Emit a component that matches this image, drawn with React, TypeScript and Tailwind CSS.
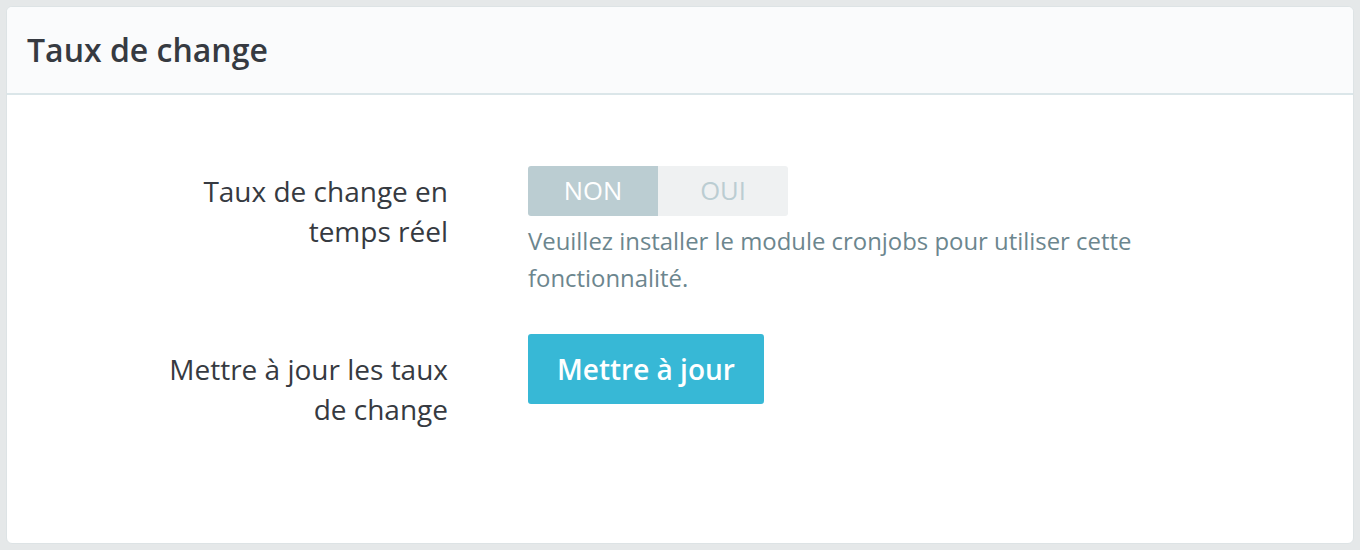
import { useState } from "react";

export default function App() {
  const [live, setLive] = useState(false);

  return (
    <div
      className="min-h-[550px] bg-[#e5e8e9] p-[6px]"
      style={{ fontFamily: '"Open Sans", "Noto Sans", sans-serif' }}
    >
      <div className="h-[538px] rounded-[6px] border border-[#dde3e5] bg-white overflow-hidden">
        {/* Card header */}
        <div className="h-[88px] flex items-center px-[20px] bg-[#fafbfc] border-b-2 border-[#dbe6e9]">
          <h3 className="text-[32px] font-semibold text-[#363a41] leading-none">Taux de change</h3>
        </div>

        {/* Form body */}
        <div className="pt-[71px] flex flex-col gap-[38px]">
          <div className="flex items-start gap-[80px]">
            <label className="w-[441px] shrink-0 text-right text-[28px] leading-[40px] text-[#363a41] pt-[5px] pl-[150px]">
              Taux de change en temps réel
            </label>
            <div className="flex flex-col">
              <div className="flex w-[260px] h-[50px] rounded-[3px] overflow-hidden text-[25.6px]">
                <button
                  onClick={() => setLive(false)}
                  className={`flex-1 flex items-center justify-center ${
                    !live ? "bg-[#bbcdd2] text-white" : "bg-[#eff1f2] text-[#bbcdd2]"
                  }`}
                >
                  NON
                </button>
                <button
                  onClick={() => setLive(true)}
                  className={`flex-1 flex items-center justify-center ${
                    live ? "bg-[#bbcdd2] text-white" : "bg-[#eff1f2] text-[#bbcdd2]"
                  }`}
                >
                  OUI
                </button>
              </div>
              <p className="mt-[6px] w-[660px] text-[23.9px] leading-[37px] text-[#6c868e]">
                Veuillez installer le module cronjobs pour utiliser cette fonctionnalité.
              </p>
            </div>
          </div>

          <div className="flex items-start gap-[80px]">
            <label className="w-[441px] shrink-0 text-right text-[28px] leading-[40px] text-[#363a41] pt-[15px] pl-[150px]">
              Mettre à jour les taux de change
            </label>
            <button className="h-[70px] px-[29px] rounded-[3px] bg-[#37b8d6] text-white text-[28px] font-semibold">
              Mettre à jour
            </button>
          </div>
        </div>
      </div>
    </div>
  );
}
